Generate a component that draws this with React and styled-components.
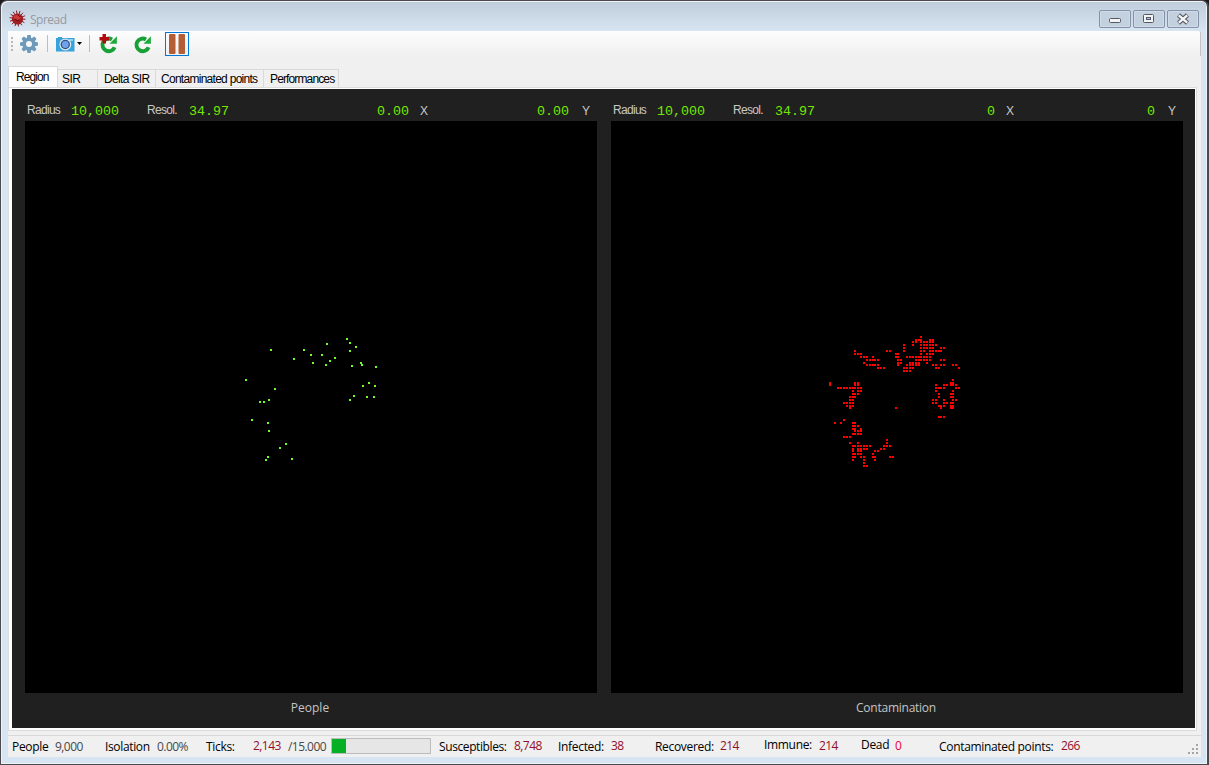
import React from 'react';
import styled, { createGlobalStyle } from 'styled-components';

const GlobalStyle = createGlobalStyle`
  html, body { margin: 0; padding: 0; background: #1c1a1c; overflow: hidden; }
  * { box-sizing: border-box; }
`;

const SANS = '"Open Sans", "Noto Sans", sans-serif';
const ARIAL = '"Liberation Sans", Arial, sans-serif';
const MONO = '"Liberation Mono", "Courier New", monospace';

const Window = styled.div`
  width: 1209px;
  height: 765px;
  display: flex;
  flex-direction: column;
  padding: 1px 6px 6px 7px;
  border: 2px solid #4c4a4e;
  border-top-width: 1px;
  border-bottom-width: 1px;
  border-left-width: 1px;
  border-radius: 7px 7px 0 0;
  background: linear-gradient(#bfcddb 0, #d7e4f2 30px);
  box-shadow: inset 1px 1px 0 #eef3f9, inset -1px -1px 0 #eef3f9;
`;

const TitleBar = styled.header`
  height: 29px;
  flex: none;
  display: flex;
  align-items: flex-start;
  padding: 8px 2px 0 1px;
`;

const Title = styled.span`
  margin: 1px auto 0 4px;
  font: 12px/18px ${SANS};
  letter-spacing: -0.5px;
  color: #969a9f;
`;

const CaptionButton = styled.div`
  width: 32px;
  height: 18px;
  margin-left: 2px;
  border: 1px solid #8491a8;
  border-radius: 2px;
  box-shadow: inset 0 0 0 1px #d0dce9;
  background: #c3d0de;
  display: flex;
  align-items: center;
  justify-content: center;
`;

const Client = styled.main`
  height: 726px;
  width: 1193px;
  flex: none;
  display: flex;
  flex-direction: column;
  background: #f0f0f0;
`;

const Toolbar = styled.div`
  height: 25px;
  flex: none;
  display: flex;
  align-items: center;
  padding-left: 3px;
  background: linear-gradient(#fdfdfd, #f0f0f0);
  border-right: 1px solid #c4c4c4;
  border-radius: 0 2px 0 0;
`;

const Grip = styled.div`
  width: 2px;
  height: 14px;
  margin-right: 7px;
  background: repeating-linear-gradient(#b8b8b8 0 2px, transparent 2px 4px);
`;

const Tool = styled.div`
  width: ${(p) => p.$w}px;
  height: 24px;
  margin-left: ${(p) => p.$gap || 0}px;
  display: flex;
  align-items: center;
  justify-content: center;
  border: ${(p) => (p.$active ? '1px solid #0078d7' : '0')};
`;

const Separator = styled.div`
  width: 1px;
  height: 17px;
  background: #bdbdbd;
  margin-left: ${(p) => p.$gap}px;
`;

const Tabs = styled.nav`
  height: 31px;
  flex: none;
  display: flex;
  align-items: flex-end;
`;

const Tab = styled.div`
  width: ${(p) => p.$w}px;
  height: ${(p) => (p.$selected ? 21 : 18)}px;
  padding-left: ${(p) => p.$pad}px;
  border: 1px solid #d9d9d9;
  border-bottom: 0;
  border-left-width: ${(p) => (p.$selected ? 1 : 0)}px;
  background: ${(p) => (p.$selected ? '#fff' : '#f0f0f0')};
  font: 12px/${(p) => (p.$selected ? 21 : 18)}px ${ARIAL};
  letter-spacing: ${(p) => p.$ls}px;
  white-space: nowrap;
  color: #000;
`;

const TabPage = styled.section`
  width: 1189px;
  height: 644px;
  flex: none;
  padding: 1px 2px 2px 3px;
  background: #fff;
  border: 1px solid #dcdcdc;
`;

const Dark = styled.div`
  height: 639px;
  width: 1183px;
  display: flex;
  gap: 14px;
  padding: 0 13px;
  background: #202020;
`;

const View = styled.article`
  width: 572px;
  display: flex;
  flex-direction: column;
`;

const Readout = styled.div`
  height: 32px;
  display: flex;
  align-items: flex-start;
  padding: 13px 0 0 2px;
`;

const ReadLabel = styled.span`
  width: ${(p) => p.$w}px;
  padding: ${(p) => p.$drop || 0}px 0 0 ${(p) => p.$pad || 0}px;
  font: 12px/16px ${ARIAL};
  letter-spacing: -0.7px;
  color: #c8c8c8;
`;

const ReadValue = styled.span`
  width: ${(p) => p.$w}px;
  padding-top: 2px;
  font: 13.33px/16px ${MONO};
  color: #74e804;
  text-align: ${(p) => p.$align || 'left'};
`;

const Canvas = styled.svg`
  width: 572px;
  height: 572px;
  background: #000;
  display: block;
  flex: none;
`;

const Caption = styled.div`
  font: 12px/16px ${SANS};
  letter-spacing: ${(p) => p.$ls}px;
  color: #c4c4c4;
  text-align: center;
  padding: 7px 2px 0 0;
`;

const StatusBar = styled.footer`
  margin-top: auto;
  height: 22px;
  flex: none;
  display: flex;
  align-items: center;
  padding-left: 4px;
  border-top: 1px solid #d9d9d9;
`;

const StatusItem = styled.span`
  width: ${(p) => p.$w}px;
  flex: none;
  font: 12px/17px ${SANS};
  letter-spacing: ${(p) => p.$ls ?? (p.$color ? -0.55 : -0.32)}px;
  white-space: nowrap;
  color: ${(p) => p.$color || '#000'};
  margin-bottom: ${(p) => p.$lift || 0}px;
`;

const Progress = styled.div`
  width: 100px;
  height: 16px;
  margin-right: 8px;
  border: 1px solid #bcbcbc;
  background: #e6e6e6;
  margin-bottom: 1px;
`;

const ProgressFill = styled.div`
  height: 14px;
  background: #06b025;
`;

const SizeGrip = styled.svg`
  margin: 5px 3px 0 auto;
`;

const PEOPLE = [
  [347, 339], [327, 344], [350, 343], [356, 347], [350, 351], [271, 350], [304, 350],
  [311, 355], [322, 355], [294, 359], [335, 358], [330, 361], [313, 363], [326, 365],
  [361, 363], [362, 365], [352, 366], [376, 367], [246, 380], [275, 389], [369, 383],
  [363, 386], [375, 386], [354, 396], [367, 397], [374, 397], [350, 400], [260, 402],
  [264, 402], [269, 400], [252, 420], [268, 423], [269, 431], [286, 444], [280, 448],
  [268, 457], [266, 460], [292, 459],
];

// Contaminated cells, grouped by row: [y, x, x, ...]
const CELLS = [
  { x: 820, y: 325, rows: [
    [78, 105, 201, 210], [87, 105, 114, 123, 228, 234], [96, 123, 132, 141, 159, 228, 234],
    [105, 141, 150, 159, 165, 174, 234], [114, 132, 234], [120, 141, 150, 159, 165, 174, 234],
    [129, 174, 183, 192], [174, 30, 105, 114], [180, 30, 105, 114],
    [189, 54, 63, 72, 81, 90, 99, 105, 114, 123], [198, 99, 114, 123], [207, 99, 105, 114],
    [216, 90, 99, 105],
  ] },
  { x: 890, y: 325, rows: [
    [36, 93], [45, 78, 87, 93, 120, 129], [51, 69, 78, 93, 102, 111, 120, 129],
    [60, 42, 69, 93, 102, 111, 120, 129, 138], [69, 42, 93, 102, 111, 120, 129, 153, 162],
    [78, 0, 42, 93, 102, 120, 129, 138, 147, 153], [87, 18, 24, 93, 111, 120, 129],
    [96, 24, 51, 60, 69, 78, 87, 93, 102, 111, 120],
    [105, 24, 33, 78, 87, 93, 102, 111, 120, 153, 162],
    [114, 24, 33, 60, 69, 78, 87, 111], [120, 24, 51, 60, 69, 78, 87, 129, 138, 153, 162, 189, 198],
    [129, 42, 51, 60, 69, 138, 147, 207], [138, 42, 51, 60], [165, 189], [174, 183, 189],
    [180, 138, 162, 171, 183, 189, 198], [189, 138, 147, 153, 162, 198, 207], [198, 138, 189],
    [207, 147, 183, 189], [216, 147, 183, 189], [225, 129, 138, 162, 189, 198],
    [234, 129, 138, 162, 171, 183, 189], [243, 147, 153, 162, 183, 189],
    [249, 18, 153, 183, 189], [276, 147, 153, 162],
  ] },
  { x: 820, y: 395, rows: [
    [6, 90, 99, 105], [15, 90, 99], [24, 72, 81, 90, 99], [33, 81, 90, 99], [39, 90],
    [75, 72], [84, 45, 63, 99, 105], [93, 99, 105, 114], [102, 99, 105, 123],
    [108, 105, 114, 123], [117, 99, 105, 114, 123], [126, 72, 81, 90], [135, 201],
    [144, 90, 114, 201], [153, 99, 105, 114, 123, 132, 141, 150, 192, 201, 210],
    [162, 99, 114, 123, 132, 141, 183, 192], [168, 99, 114, 123, 165, 174],
    [177, 99, 105, 114, 123, 159], [186, 99, 105, 123, 132, 159, 165, 210, 219],
    [195, 99, 132, 165], [204, 132], [213, 132, 141],
  ] },
];

const CONTAMINATION = CELLS.flatMap((g) =>
  g.rows.flatMap(([y, ...xs]) => xs.map((x) => [g.x + x / 3, g.y + y / 3]))
);

function Plot({ points, left, color }) {
  return (
    <Canvas viewBox="0 0 572 572" shapeRendering="crispEdges">
      {points.map(([x, y], i) => (
        <rect key={i} x={x - left - 1} y={y - 122} width="2" height="2" fill={color} />
      ))}
    </Canvas>
  );
}

function RegionView({ points, left, color, x, y, caption, captionSpacing }) {
  return (
    <View>
      <Readout>
        <ReadLabel $w={44}>Radius</ReadLabel>
        <ReadValue $w={76}>10,000</ReadValue>
        <ReadLabel $w={42}>Resol.</ReadLabel>
        <ReadValue $w={60}>34.97</ReadValue>
        <ReadValue $w={160} $align="right">{x}</ReadValue>
        <ReadLabel $w={20} $pad={11} $drop={1}>X</ReadLabel>
        <ReadValue $w={140} $align="right">{y}</ReadValue>
        <ReadLabel $w={24} $pad={13} $drop={1}>Y</ReadLabel>
      </Readout>
      <Plot points={points} left={left} color={color} />
      <Caption $ls={captionSpacing}>{caption}</Caption>
    </View>
  );
}

function VirusIcon() {
  return (
    <svg width="17" height="17" viewBox="0 0 17 17">
      <g stroke="#7d2025" strokeWidth="1">
        {Array.from({ length: 14 }, (_, i) => {
          const a = (i * Math.PI) / 7 + 0.1;
          return <line key={i} x1="8.5" y1="8.5" x2={8.5 + 8 * Math.cos(a)} y2={8.5 + 8 * Math.sin(a)} />;
        })}
      </g>
      <circle cx="8.5" cy="9" r="5.6" fill="#a31c22" />
      <ellipse cx="8" cy="7.500" rx="3.5" ry="2.4" fill="#cc3a3a" />
      <path d="M5 10l2-1 1 2 3-1M9 5l2 2" stroke="#6b1217" fill="none" />
    </svg>
  );
}

function GearIcon() {
  return (
    <svg width="18" height="18" viewBox="0 0 18 18">
      <g fill="#6d9aba">
        {[0, 45, 90, 135].map((a) => (
          <path key={a} d="M7.4 0h3.2l.8 4v10l-.8 4H7.4l-.8-4V4z" transform={`rotate(${a} 9 9)`} />
        ))}
        <circle cx="9" cy="9" r="6.3" />
      </g>
      <circle cx="9" cy="9" r="3" fill="#f6f6f6" />
    </svg>
  );
}

function CameraIcon() {
  return (
    <svg width="19" height="16" viewBox="0 0 19 16">
      <path d="M1 2h1V1h4v1h12.500v13.500H0V2z" fill="#38a2dc" />
      <path d="M13 3h4v2h-4z" fill="#92d1f1" />
      <circle cx="9.300" cy="8.500" r="5.900" fill="#dce9f2" />
      <circle cx="9.300" cy="8.500" r="4.700" fill="#35527d" />
      <circle cx="9.300" cy="8.500" r="3.400" fill="#6ea2ee" />
    </svg>
  );
}

function RefreshIcon({ plus }) {
  return (
    <svg width="19" height="20" viewBox="0 0 19 20">
      <path d="M15.600 13.200A6.300 6.300 0 1 1 13 5.500" fill="none" stroke="#16a035" strokeWidth="3.900" />
      <path d="M17.900 2.300v7.500h-7.400z" fill="#1cab3b" />
      {plus && <path d="M3.500 0h3.500v3h3v3.600H7v3H3.500v-3h-3V3h3z" fill="#b50a0d" />}
    </svg>
  );
}

const Pause = () => (
  <svg width="16" height="20" viewBox="0 0 16 20">
    <rect width="6.500" height="20" rx="1" fill="#b55e36" />
    <rect x="9.500" width="6.500" height="20" rx="1" fill="#b55e36" />
  </svg>
);

const GREY = '#484848';
const WINE = '#900f2c';

export default function App() {
  return (
    <>
      <GlobalStyle />
      <Window>
        <TitleBar>
          <VirusIcon />
          <Title>Spread</Title>
          <CaptionButton>
            <svg width="12" height="12"><rect x="0.500" y="5.500" width="11" height="4" rx="1" fill="#f4f4f4" stroke="#545866" /></svg>
          </CaptionButton>
          <CaptionButton>
            <svg width="12" height="12"><rect x="0.500" y="1.500" width="10" height="8" rx="1" fill="#f4f4f4" stroke="#545866" /><rect x="3.500" y="4.500" width="4" height="2" fill="#b9c8dc" stroke="#545866" /></svg>
          </CaptionButton>
          <CaptionButton>
            <svg width="12" height="12"><path d="M1.500 2l9 8M10.500 2l-9 8" stroke="#545866" strokeWidth="4.400" /><path d="M1.800 2.300l8.400 7.400M10.200 2.300l-8.400 7.400" stroke="#f6f6f6" strokeWidth="2.400" /></svg>
          </CaptionButton>
        </TitleBar>
        <Client>
          <Toolbar>
            <Grip />
            <Tool $w={18}><GearIcon /></Tool>
            <Separator $gap={9} />
            <Tool $w={19} $gap={8}><CameraIcon /></Tool>
            <Tool $w={7} $gap={1}>
              <svg width="5" height="3"><path d="M0 0h5L2.500 3z" /></svg>
            </Tool>
            <Separator $gap={6} />
            <Tool $w={19} $gap={9}><RefreshIcon plus /></Tool>
            <Tool $w={19} $gap={15}><RefreshIcon /></Tool>
            <Tool $w={24} $gap={13} $active><Pause /></Tool>
          </Toolbar>
          <Tabs>
            <Tab $selected $w={50} $pad={7} $ls={-0.9}>Region</Tab>
            <Tab $w={40} $pad={4} $ls={-0.6}>SIR</Tab>
            <Tab $w={58} $pad={6} $ls={-0.65}>Delta SIR</Tab>
            <Tab $w={108} $pad={5} $ls={-0.72}>Contaminated points</Tab>
            <Tab $w={75} $pad={6} $ls={-0.87}>Performances</Tab>
          </Tabs>
          <TabPage>
            <Dark>
              <RegionView points={PEOPLE} left={25} color="#6eff28" x="0.00" y="0.00" caption="People" captionSpacing={0} />
              <RegionView points={CONTAMINATION} left={611} color="#f00" x="0" y="0" caption="Contamination" captionSpacing={-0.25} />
            </Dark>
          </TabPage>
          <StatusBar>
            <StatusItem $w={43}>People</StatusItem>
            <StatusItem $w={50} $color={GREY}>9,000</StatusItem>
            <StatusItem $w={52} $ls={-0.35}>Isolation</StatusItem>
            <StatusItem $w={49} $color={GREY}>0.00%</StatusItem>
            <StatusItem $w={47}>Ticks:</StatusItem>
            <StatusItem $w={35} $color={WINE} $lift={2}>2,143</StatusItem>
            <StatusItem $w={43} $color={GREY}>/15.000</StatusItem>
            <Progress><ProgressFill style={{ width: `${(2143 / 15000) * 98}%` }} /></Progress>
            <StatusItem $w={75} $ls={-0.4}>Susceptibles:</StatusItem>
            <StatusItem $w={44} $color={WINE} $lift={2}>8,748</StatusItem>
            <StatusItem $w={53}>Infected:</StatusItem>
            <StatusItem $w={44} $color={WINE} $lift={2}>38</StatusItem>
            <StatusItem $w={65}>Recovered:</StatusItem>
            <StatusItem $w={44} $color={WINE} $lift={2}>214</StatusItem>
            <StatusItem $w={55} $lift={4}>Immune:</StatusItem>
            <StatusItem $w={42} $color={WINE} $lift={2}>214</StatusItem>
            <StatusItem $w={34} $lift={4}>Dead</StatusItem>
            <StatusItem $w={44} $color="#e8003c" $lift={2}>0</StatusItem>
            <StatusItem $w={122}>Contaminated points:</StatusItem>
            <StatusItem $w={30} $color={WINE} $lift={2}>266</StatusItem>
            <SizeGrip width="10" height="10" fill="#a5a5a5">
              <path d="M8 0h2v2h-2zM4 4h2v2h-2zM8 4h2v2h-2zM0 8h2v2h-2zM4 8h2v2h-2zM8 8h2v2h-2z" />
            </SizeGrip>
          </StatusBar>
        </Client>
      </Window>
    </>
  );
}
